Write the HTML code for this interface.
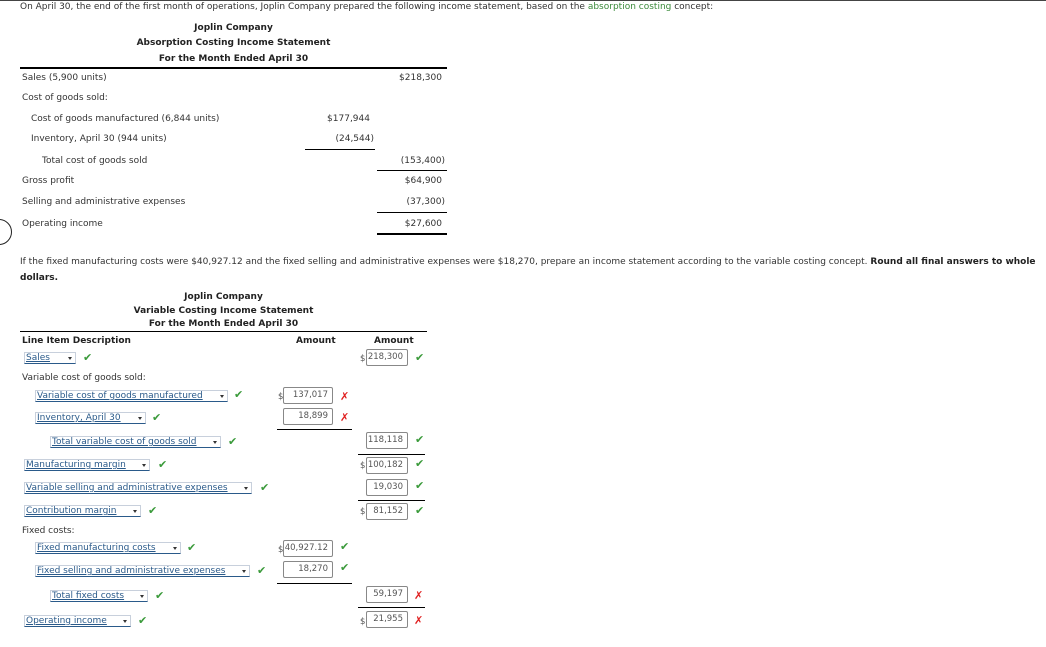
<!DOCTYPE html>
<html><head><style>
body{margin:0;width:1046px;height:646px;background:#fff;position:relative;font-family:"DejaVu Sans","Liberation Sans",sans-serif;font-size:9px;color:#333;overflow:hidden}
.w{position:absolute;left:0;top:1px;width:1046px;height:646px}
.a{position:absolute;white-space:nowrap;line-height:12px}
.b{font-weight:bold;color:#222}
.r{text-align:right}
.c{text-align:center}
.hl{position:absolute;height:1px;background:#000}
.sel{position:absolute;height:12px;border:1px solid #c8d0dc;border-bottom:1.5px solid #2a5a8a;color:#2a5a8a;text-decoration:underline;line-height:11px;padding-left:1px;font-size:9px;box-sizing:border-box;background:#fff}
.sel:after{content:"";position:absolute;right:3px;top:4px;border-left:2.5px solid transparent;border-right:2.5px solid transparent;border-top:3px solid #333}
.inp{position:absolute;height:17px;border:1px solid #888;border-radius:2px;box-sizing:border-box;text-align:right;padding-right:4px;line-height:15px;font-size:8.5px;color:#555;background:#fff}
.ok{position:absolute;color:#3a9a3a;font-size:11px;line-height:12px}
.x{position:absolute;color:#e02020;font-size:11px;font-weight:bold;line-height:12px}
.d{position:absolute;font-size:8.5px;color:#555;line-height:12px}
</style></head><body>
<div class="hl" style="left:0;top:0;width:1046px;height:1px;background:#444"></div>
<div class="a" style="left:20px;top:1px">On April 30, the end of the first month of operations, Joplin Company prepared the following income statement, based on the <span style="color:#3a8a3a">absorption costing</span> concept:</div>
<div class="w">
<div class="a b c" style="left:20px;width:427px;top:21px">Joplin Company</div>
<div class="a b c" style="left:20px;width:427px;top:36px">Absorption Costing Income Statement</div>
<div class="a b c" style="left:20px;width:427px;top:52px">For the Month Ended April 30</div>
<div class="hl" style="left:20px;top:66px;width:427px;height:1.5px"></div>
<div class="a" style="left:22px;top:71px">Sales (5,900 units)</div><div class="a r" style="left:380px;width:62px;top:71px">$218,300</div>
<div class="a" style="left:22px;top:91px">Cost of goods sold:</div>
<div class="a" style="left:31px;top:112px">Cost of goods manufactured (6,844 units)</div><div class="a r" style="left:300px;width:70px;top:112px">$177,944</div>
<div class="a" style="left:31px;top:132px">Inventory, April 30 (944 units)</div><div class="a r" style="left:300px;width:74px;top:132px">(24,544)</div>
<div class="hl" style="left:305px;top:148px;width:70px"></div>
<div class="a" style="left:42px;top:154px">Total cost of goods sold</div><div class="a r" style="left:380px;width:65px;top:154px">(153,400)</div>
<div class="hl" style="left:377px;top:169px;width:70px"></div>
<div class="a" style="left:22px;top:174px">Gross profit</div><div class="a r" style="left:380px;width:62px;top:174px">$64,900</div>
<div class="a" style="left:22px;top:195px">Selling and administrative expenses</div><div class="a r" style="left:380px;width:65px;top:195px">(37,300)</div>
<div class="hl" style="left:377px;top:211px;width:70px"></div>
<div class="a" style="left:22px;top:217px">Operating income</div><div class="a r" style="left:380px;width:62px;top:217px">$27,600</div>
<div class="hl" style="left:377px;top:232px;width:70px;height:2px"></div>
<div style="position:absolute;left:-14px;top:218px;width:24px;height:24px;border:1.5px solid #222;border-radius:50%"></div>
<div class="a" style="left:20px;top:255px">If the fixed manufacturing costs were $40,927.12 and the fixed selling and administrative expenses were $18,270, prepare an income statement according to the variable costing concept. <b style="color:#222">Round all final answers to whole</b></div>
<div class="a b" style="left:20px;top:271px">dollars.</div>
<div class="a b c" style="left:20px;width:407px;top:290px">Joplin Company</div>
<div class="a b c" style="left:20px;width:407px;top:304px">Variable Costing Income Statement</div>
<div class="a b c" style="left:20px;width:407px;top:317px">For the Month Ended April 30</div>
<div class="hl" style="left:20px;top:330px;width:407px"></div>
<div class="a b" style="left:22px;top:334px">Line Item Description</div>
<div class="a b" style="left:296px;top:334px">Amount</div>
<div class="a b" style="left:374px;top:334px">Amount</div>

<div class="sel" style="left:24px;top:351px;width:52px">Sales</div><div class="ok" style="left:83px;top:351px">✔</div>
<div class="d" style="left:360px;top:352px">$</div><div class="inp" style="left:366px;top:348px;width:42px">218,300</div><div class="ok" style="left:415px;top:351px">✔</div>
<div class="a" style="left:22px;top:371px">Variable cost of goods sold:</div>
<div class="sel" style="left:35px;top:389px;width:193px">Variable cost of goods manufactured</div><div class="ok" style="left:234px;top:388px">✔</div>
<div class="d" style="left:278px;top:390px">$</div><div class="inp" style="left:283px;top:386px;width:50px">137,017</div><div class="x" style="left:340px;top:390px">✗</div>
<div class="sel" style="left:35px;top:411px;width:111px">Inventory, April 30</div><div class="ok" style="left:152px;top:411px">✔</div>
<div class="inp" style="left:283px;top:407px;width:50px">18,899</div><div class="x" style="left:340px;top:411px">✗</div>
<div class="hl" style="left:277px;top:428px;width:75px"></div>
<div class="sel" style="left:50px;top:435px;width:171px">Total variable cost of goods sold</div><div class="ok" style="left:228px;top:435px">✔</div>
<div class="inp" style="left:366px;top:431px;width:42px">118,118</div><div class="ok" style="left:415px;top:433px">✔</div>
<div class="hl" style="left:358px;top:453px;width:67px"></div>
<div class="sel" style="left:24px;top:458px;width:126px">Manufacturing margin</div><div class="ok" style="left:158px;top:458px">✔</div>
<div class="d" style="left:360px;top:459px">$</div><div class="inp" style="left:366px;top:456px;width:42px">100,182</div><div class="ok" style="left:415px;top:457px">✔</div>
<div class="sel" style="left:24px;top:481px;width:228px">Variable selling and administrative expenses</div><div class="ok" style="left:260px;top:481px">✔</div>
<div class="inp" style="left:366px;top:478px;width:42px">19,030</div><div class="ok" style="left:415px;top:479px">✔</div>
<div class="hl" style="left:358px;top:499px;width:67px"></div>
<div class="sel" style="left:24px;top:504px;width:117px">Contribution margin</div><div class="ok" style="left:148px;top:504px">✔</div>
<div class="d" style="left:360px;top:505px">$</div><div class="inp" style="left:366px;top:502px;width:42px">81,152</div><div class="ok" style="left:415px;top:504px">✔</div>
<div class="a" style="left:22px;top:524px">Fixed costs:</div>
<div class="sel" style="left:35px;top:541px;width:146px">Fixed manufacturing costs</div><div class="ok" style="left:187px;top:541px">✔</div>
<div class="d" style="left:278px;top:543px">$</div><div class="inp" style="left:283px;top:539px;width:50px">40,927.12</div><div class="ok" style="left:340px;top:540px">✔</div>
<div class="sel" style="left:35px;top:564px;width:215px">Fixed selling and administrative expenses</div><div class="ok" style="left:257px;top:564px">✔</div>
<div class="inp" style="left:283px;top:560px;width:50px">18,270</div><div class="ok" style="left:340px;top:561px">✔</div>
<div class="hl" style="left:277px;top:582px;width:75px"></div>
<div class="sel" style="left:50px;top:589px;width:98px">Total fixed costs</div><div class="ok" style="left:155px;top:589px">✔</div>
<div class="inp" style="left:366px;top:585px;width:42px">59,197</div><div class="x" style="left:414px;top:589px">✗</div>
<div class="hl" style="left:358px;top:606px;width:67px"></div>
<div class="sel" style="left:24px;top:614px;width:107px">Operating income</div><div class="ok" style="left:138px;top:614px">✔</div>
<div class="d" style="left:360px;top:615px">$</div><div class="inp" style="left:366px;top:610px;width:42px">21,955</div><div class="x" style="left:414px;top:614px">✗</div>
</div>
</body></html>
